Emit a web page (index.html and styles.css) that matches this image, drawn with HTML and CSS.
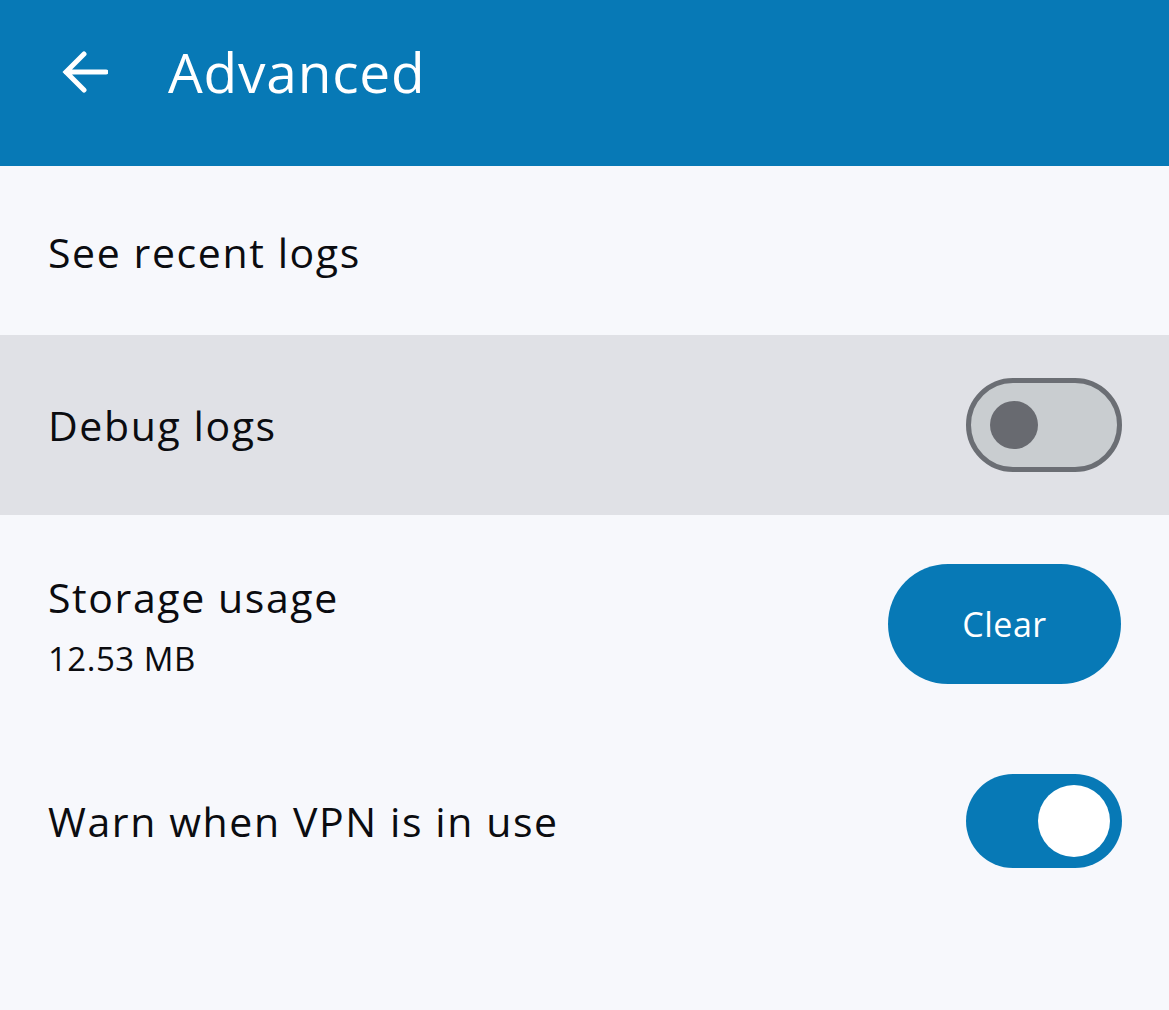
FILE: index.html
```html
<!DOCTYPE html>
<html>
<head>
<meta charset="utf-8">
<link rel="stylesheet" href="styles.css">
</head>
<body>
<header class="appbar">
  <svg class="back" width="48" height="48" viewBox="0 0 48 48" aria-hidden="true">
    <path d="M46 24H6 M24 6L6 24L24 42" fill="none" stroke="#fff" stroke-width="5" stroke-linecap="round" stroke-linejoin="miter"/>
  </svg>
  <h1 class="title">Advanced</h1>
</header>
<main class="list">
  <div class="row row-logs"><span class="label">See recent logs</span></div>
  <div class="row row-debug">
    <span class="label">Debug logs</span>
    <span class="toggle toggle-off"><span class="knob"></span></span>
  </div>
  <div class="row row-storage">
    <div class="texts">
      <span class="label">Storage usage</span>
      <span class="sub">12.53 MB</span>
    </div>
    <button class="btn">Clear</button>
  </div>
  <div class="row row-vpn">
    <span class="label">Warn when VPN is in use</span>
    <span class="toggle toggle-on"><span class="knob"></span></span>
  </div>
</main>
</body>
</html>
```
FILE: styles.css
```css
html, body {
  margin: 0;
  padding: 0;
  background: #f7f8fc;
  font-family: "Open Sans", "Noto Sans", sans-serif;
  color: #0b0c10;
}
.appbar {
  height: 166px;
  background: #0779b6;
  display: flex;
  align-items: center;
  padding-left: 60px;
  box-sizing: border-box;
}
.back {
  display: block;
  margin-top: -22px;
}
.title {
  margin: 0 0 0 60px;
  color: #fff;
  font-weight: 500;
  font-size: 55px;
  letter-spacing: 0.8px;
  margin-top: -24px;
}
.row {
  display: flex;
  align-items: center;
  justify-content: space-between;
  padding: 0 48px;
  box-sizing: border-box;
}
.row-logs { height: 169px; }
.row-debug { height: 180px; background: #e0e1e6; }
.row-storage { height: 216px; }
.row-vpn { height: 180px; }
.label {
  font-size: 41px;
  letter-spacing: 1.6px;
  line-height: 1;
}
.row-logs .label { margin-top: 4px; }
.texts {
  display: flex;
  flex-direction: column;
  gap: 24px;
  margin-top: 5px;
}
.sub {
  font-size: 33px;
  line-height: 1;
  letter-spacing: 0.5px;
}
.toggle {
  width: 156px;
  height: 94px;
  border-radius: 47px;
  box-sizing: border-box;
  display: flex;
  align-items: center;
  margin-right: -1px;
}
.toggle-off {
  background: #c9cdd0;
  border: 5px solid #6b6e74;
  padding-left: 19px;
}
.toggle-off .knob {
  width: 48px;
  height: 48px;
  border-radius: 50%;
  background: #686a70;
}
.toggle-on {
  background: #0779b6;
  justify-content: flex-end;
  padding-right: 12px;
}
.toggle-on .knob {
  width: 72px;
  height: 72px;
  border-radius: 50%;
  background: #fff;
}
.btn {
  width: 233px;
  height: 120px;
  border: 0;
  border-radius: 60px;
  background: #0779b6;
  color: #fff;
  font-family: "Open Sans", "Noto Sans", sans-serif;
  font-size: 34px;
  font-weight: 500;
  letter-spacing: 0.5px;
  margin-top: 1px;
}
```
